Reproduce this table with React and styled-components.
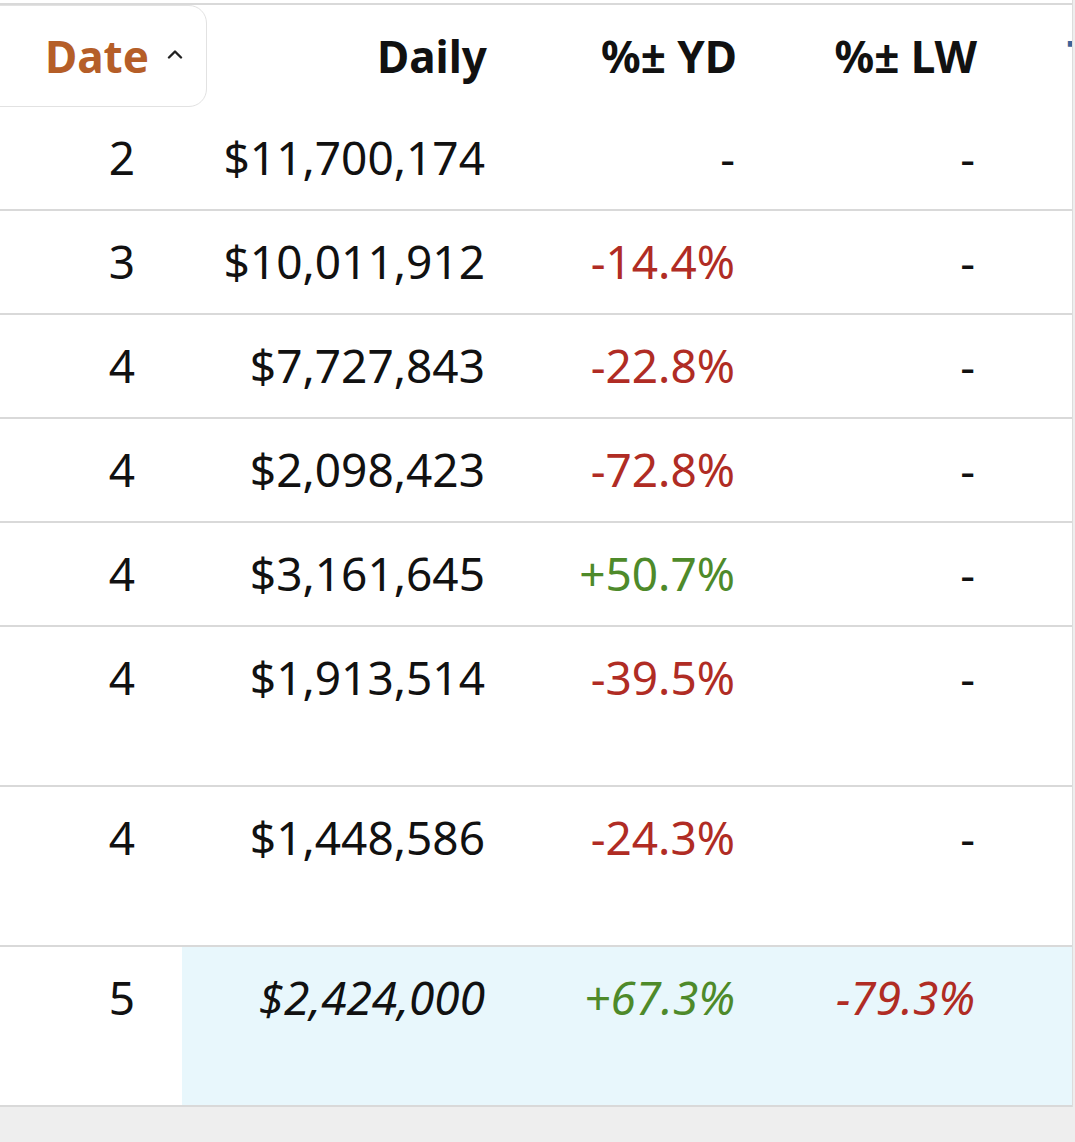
import React from "react";
import styled, { createGlobalStyle } from "styled-components";

const GlobalStyle = createGlobalStyle`
  body {
    margin: 0;
    background: #eeeeee;
    font-family: "Noto Sans", "Open Sans", Arial, sans-serif;
    color: #111;
  }
`;

const columns = "182px 318px 250px 240px 300px";

const rows = [
  { rank: "2", daily: "$11,700,174", yd: "-", lw: "-" },
  { rank: "3", daily: "$10,011,912", yd: "-14.4%", lw: "-" },
  { rank: "4", daily: "$7,727,843", yd: "-22.8%", lw: "-" },
  { rank: "4", daily: "$2,098,423", yd: "-72.8%", lw: "-" },
  { rank: "4", daily: "$3,161,645", yd: "+50.7%", lw: "-" },
  { rank: "4", daily: "$1,913,514", yd: "-39.5%", lw: "-", tall: true },
  { rank: "4", daily: "$1,448,586", yd: "-24.3%", lw: "-", tall: true },
  { rank: "5", daily: "$2,424,000", yd: "+67.3%", lw: "-79.3%", tall: true, current: true },
];

const toneOf = (v) => (v.startsWith("+") ? "up" : v.length > 1 && v.startsWith("-") ? "down" : "none");

const App = () => {
  return (
    <>
      <GlobalStyle />
      <Page>
        <Table>
          <HeaderRow>
            <SortedHead>
              <SortCard>
                Date
                <Chevron viewBox="0 0 16 10">
                  <polyline points="2,8.5 8,2.5 14,8.5" />
                </Chevron>
              </SortCard>
            </SortedHead>
            <Head>Daily</Head>
            <Head>%± YD</Head>
            <Head>%± LW</Head>
            <LinkHead>Theaters</LinkHead>
          </HeaderRow>
          {rows.map((r, i) => (
            <Row key={i} $tall={r.tall}>
              <RankCell>{r.rank}</RankCell>
              <Cell $current={r.current}>{r.daily}</Cell>
              <Cell $current={r.current} $tone={toneOf(r.yd)}>{r.yd}</Cell>
              <Cell $current={r.current} $tone={toneOf(r.lw)}>{r.lw}</Cell>
              <Cell $current={r.current} />
            </Row>
          ))}
        </Table>
      </Page>
    </>
  );
};

const Page = styled.div`
  width: 1072px;
  background: #fff;
  border-right: 1px solid #dcdcdc;
  padding-top: 3px;
  overflow: hidden;
`;

const Table = styled.div`
  border-top: 2px solid #d9d9d9;
  display: flex;
  flex-direction: column;
`;

const HeaderRow = styled.div`
  display: grid;
  grid-template-columns: ${columns};
  height: 102px;
  font-size: 44px;
  font-weight: 700;
`;

const Head = styled.div`
  display: flex;
  align-items: center;
  justify-content: flex-end;
  padding-right: 13px;
  white-space: nowrap;
`;

const SortedHead = styled.div`
  position: relative;
  z-index: 1;
`;

const SortCard = styled.div`
  box-sizing: border-box;
  margin-left: -20px;
  width: 227px;
  height: 102px;
  padding-left: 64px;
  display: flex;
  align-items: center;
  gap: 18px;
  color: #b55e28;
  background: #fff;
  border: 1.5px solid #e2e2e2;
  border-radius: 18px;
`;

const Chevron = styled.svg`
  width: 16px;
  height: 10px;
  margin-top: -4px;
  fill: none;
  stroke: #222;
  stroke-width: 2.4;
  stroke-linecap: round;
  stroke-linejoin: round;
`;

const LinkHead = styled.div`
  display: flex;
  align-items: center;
  padding-left: 77px;
  color: #3d6399;
  white-space: nowrap;
`;

const Row = styled.div`
  display: grid;
  grid-template-columns: ${columns};
  min-height: ${(p) => (p.$tall ? "158px" : "102px")};
  border-bottom: 2px solid #d9d9d9;
  font-size: 46px;
  line-height: 60px;
`;

const RankCell = styled.div`
  text-align: right;
  padding: 20px 47px 0 0;
  background: #fff;
`;

const toneColor = { up: "#4e8a2a", down: "#b02c24", none: "#111" };

const Cell = styled.div`
  text-align: right;
  padding: 20px 15px 0 0;
  white-space: nowrap;
  color: ${(p) => toneColor[p.$tone || "none"]};
  background: ${(p) => (p.$current ? "#e8f7fc" : "transparent")};
  font-style: ${(p) => (p.$current ? "italic" : "normal")};
`;

export default App;
